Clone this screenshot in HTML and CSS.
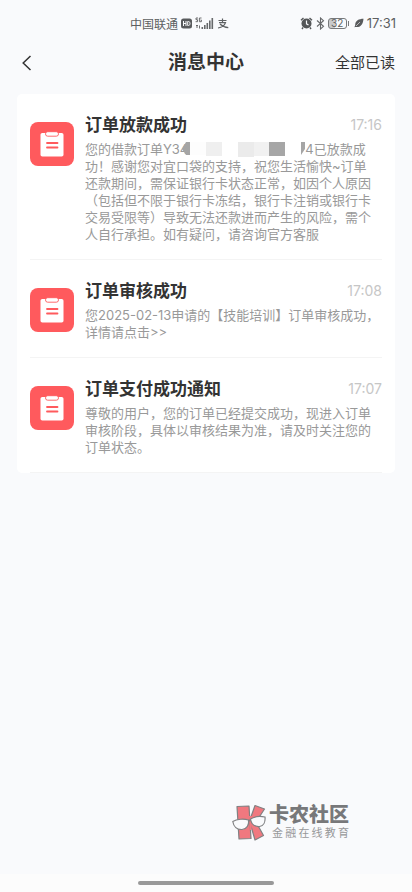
FILE: index.html
```html
<!DOCTYPE html>
<html lang="zh-CN">
<head>
<meta charset="utf-8">
<meta name="viewport" content="width=device-width, initial-scale=1">
<title>消息中心</title>
<link rel="stylesheet" href="styles.css">
</head>
<body>
<svg class="defs" aria-hidden="true">
  <symbol id="clipboard" viewBox="0 0 44 44">
    <rect x="10.500" y="11" width="23" height="23.500" rx="1.800" fill="#fff"/>
    <rect x="15.500" y="9.700" width="13" height="4.500" rx="2.200" fill="#fff" stroke="#ff5a5d" stroke-width=".9"/>
    <path d="M17 21h10.500M17 25.500h10.500" stroke="#ff5a5d" stroke-width="1.800" stroke-linecap="round"/>
  </symbol>
</svg>

<div class="status">
  <div class="status-group">
    <span>中国联通</span>
    <svg width="11" height="11" viewBox="0 0 11 11"><rect y=".5" width="11" height="10" rx="2.500" fill="#595b5d"/><path d="M2.500 3v5M5 3v5M2.500 5.500H5M6.700 3.500v4h.8c2 0 2-4 0-4z" fill="none" stroke="#f9fafc"/></svg>
    <svg width="19" height="13" viewBox="0 0 19 13"><g fill="none" stroke="#5d5f61" stroke-width=".9"><path d="M3 1H1v1.700h1.500v2H.6M6.500 1H4.400v3.700h2V3H5.500M2 8v3M1 9l1-1 1 1M4.500 8.500v3"/></g><path d="M6.500 10h1.600v2H6.500zM9 8h1.600v4H9zM11.500 6h1.600v6h-1.600zM14 3.500h1.600V12H14zM16.500 1h1.600v11h-1.600z" fill="#66686a"/></svg>
    <svg width="12" height="11" viewBox="0 0 12 11"><path d="M1.500 2.500h8M5.500.5v4M2 4.700h6.500C7.500 8 4.500 9.500 1 10M3 6c2 2 4.500 3.300 8.300 3.700" fill="none" stroke="#606264" stroke-width="1.200"/></svg>
  </div>
  <div class="status-group">
    <svg width="13" height="13" viewBox="0 0 13 13"><circle cx="6.500" cy="6.500" r="5" fill="#545658"/><path d="M1 3.300L3.500 1M12 3.300L9.500 1M3 10.500l-1 1.500M10 10.500l1 1.500" stroke="#545658" stroke-width="1.400"/><path d="M6.500 3.500v3.300l2 1.300" fill="none" stroke="#f9fafc" stroke-width="1.200"/></svg>
    <svg width="9" height="13" viewBox="0 0 9 13"><path d="M1 3.500l6.500 5.800-3 2.700V1l3 2.700L1 9.500" fill="none" stroke="#66686a" stroke-width="1.100"/></svg>
    <span class="battery">32</span>
    <svg width="10" height="10" viewBox="0 0 10 10"><path d="M9.500.7C5 .8 1 2.500 1.200 7.300L.4 9.200l1-.2C6 9.700 9 7 9.500.7z" fill="#595b5d"/><path d="M2 8l4-4" stroke="#f9fafc" stroke-width=".6"/></svg>
    <span class="clock">17:31</span>
  </div>
</div>

<header class="header">
  <button class="back" type="button" aria-label="返回"><svg width="12" height="18" viewBox="0 0 12 18"><path d="M10.500 2L3.200 9l7.300 7" fill="none" stroke="#333" stroke-width="1.500"/></svg></button>
  <h1>消息中心</h1>
  <button class="read-all" type="button">全部已读</button>
</header>

<main class="main">
  <section class="card">
    <article class="item">
      <svg class="icon"><use href="#clipboard"/></svg>
      <div class="content">
        <div class="row"><h2>订单放款成功</h2><time>17:16</time></div>
        <p><span class="order"><span>您的借款订单Y34</span><svg class="mask" width="123" height="16" viewBox="0 0 123 16"><path d="M0 8L4 1h4v13H4z" fill="#a5a5a5"/><path d="M8 1h16v13H8z" fill="#fdfdfd"/><path d="M24 1h16v14H24z" fill="#efefef"/><path d="M56 1h16v15H56z" fill="#ebebeb"/><path d="M72 1h15v14H72z" fill="#f1f1f1"/><path d="M87 1h16v14H87z" fill="#a6a6a6"/><path d="M119 1h7l-3 7-4 6z" fill="#a5a5a5"/></svg><span>4已放款成</span></span>功！感谢您对宜口袋的支持，祝您生活愉快~订单<br>还款期间，需保证银行卡状态正常，如因个人原因（包括但不限于银行卡冻结，银行卡注销或银行卡交易受限等）导致无法还款进而产生的风险，需个人自行承担。如有疑问，请咨询官方客服</p>
      </div>
    </article>
    <article class="item">
      <svg class="icon"><use href="#clipboard"/></svg>
      <div class="content">
        <div class="row"><h2>订单审核成功</h2><time>17:08</time></div>
        <p>您2025-02-13申请的【技能培训】订单审核成功，详情请点击&gt;&gt;</p>
      </div>
    </article>
    <article class="item">
      <svg class="icon"><use href="#clipboard"/></svg>
      <div class="content">
        <div class="row"><h2>订单支付成功通知</h2><time>17:07</time></div>
        <p>尊敬的用户，您的订单已经提交成功，现进入订单审核阶段，具体以审核结果为准，请及时关注您的订单状态。</p>
      </div>
    </article>
  </section>

  <div class="brand">
    <svg width="36" height="37" viewBox="0 0 36 37">
      <g fill="#f0787f" stroke="#808183" stroke-width="1.200" stroke-linejoin="round">
        <path d="M17.500 17L23 1.500l9.500 3.500L24 18l7.500 13.500-8.500 4.500z"/>
        <path d="M5 2.500l12-.5 2 32.500-12 .5z"/>
      </g>
      <path d="M17 12h3.500l-1 14H18z" fill="#f0787f"/>
      <g fill="#f9fafc" stroke="#808183" stroke-width="1.200">
        <path d="M.8 17.500c4-2.500 11-3 15.700-1.500.8 5-1.500 9-6.500 9.500-5 .2-8.500-3-9.200-8z"/>
        <path d="M18.500 15c4-2.500 10-3 14.500-2 .5 5-1.500 9-5.500 9.500-5 .3-8.300-2.500-9-7.500z"/>
      </g>
      <path d="M16.500 17l2-1" stroke="#808183" stroke-width="1.500"/>
    </svg>
    <div class="brand-text"><strong>卡农社区</strong><span>金融在线教育</span></div>
  </div>
</main>

<div class="nav"><span class="pill"></span></div>
</body>
</html>
```
FILE: styles.css
```css
* { box-sizing: border-box; margin: 0; padding: 0; }

body {
  min-height: 100vh;
  display: flex;
  flex-direction: column;
  background: #f9fafc;
  color: #333;
  font-family: Inter, "Noto Sans CJK SC", sans-serif;
}

button { border: 0; background: none; font: inherit; color: inherit; }
svg { display: block; flex: none; }
.defs { position: absolute; width: 0; height: 0; }

.status {
  display: flex;
  justify-content: space-between;
  height: 46px;
  padding: 0 16px 0 130px;
  color: #5d5f61;
  font-size: 12px;
}
.status-group { display: flex; align-items: center; gap: 3px; }
.clock { font-size: 13px; }
.battery {
  position: relative;
  width: 19px;
  height: 11px;
  margin-right: 4px;
  border: 1px solid #77797b;
  border-radius: 3px;
  background: linear-gradient(90deg, #c9cacc 35%, transparent 35%);
  font-size: 10px;
  line-height: 9px;
  text-align: center;
}
.battery::after {
  content: "";
  position: absolute;
  top: 2px;
  right: -3px;
  width: 1px;
  height: 5px;
  background: #77797b;
}

.header {
  display: grid;
  grid-template-columns: 1fr auto 1fr;
  align-items: center;
  height: 34px;
  margin-bottom: 14px;
  padding: 0 17px;
}
.header h1 { font-size: 19px; line-height: 28px; font-weight: 700; }
.back { justify-self: start; padding: 0 3px; }
.read-all { justify-self: end; font-size: 15px; line-height: 24px; }

.main { flex: 1; display: flex; flex-direction: column; padding: 0 17px; }
.card { padding: 0 13px; border-radius: 5px; background: #fff; }
.item {
  display: flex;
  gap: 11px;
  padding: 18px 0 16px;
  border-bottom: 1px solid #f4f4f4;
}
.icon {
  width: 44px;
  height: 44px;
  margin-top: 10px;
  border-radius: 8px;
  background: #ff5a5d;
}
.content { flex: 1; min-width: 0; }
.row { display: flex; align-items: center; justify-content: space-between; margin-bottom: 3px; }
.row h2 { font-size: 17px; line-height: 26px; font-weight: 700; }
.row time { color: #c6c6c6; font-size: 14px; line-height: 24px; }
.item p { color: #999; font-size: 13px; line-height: 17px; }
.order { display: flex; }
.mask { margin-left: -6px; }

.brand {
  display: flex;
  align-items: center;
  align-self: flex-end;
  gap: 1px;
  margin: auto 46px 33px 0;
  color: #77787a;
}
.brand-text { display: flex; flex-direction: column; }
.brand-text strong { font-size: 20px; line-height: 21px; font-weight: 900; }
.brand-text span {
  padding-left: 3px;
  font-size: 11px;
  line-height: 14px;
  color: #97989a;
  text-align: justify;
  text-align-last: justify;
  text-justify: inter-character;
}

.nav { display: flex; align-items: center; justify-content: center; height: 18px; background: #fcfcfc; }
.pill { width: 33%; height: 4px; border-radius: 2px; background: #999; }
```
